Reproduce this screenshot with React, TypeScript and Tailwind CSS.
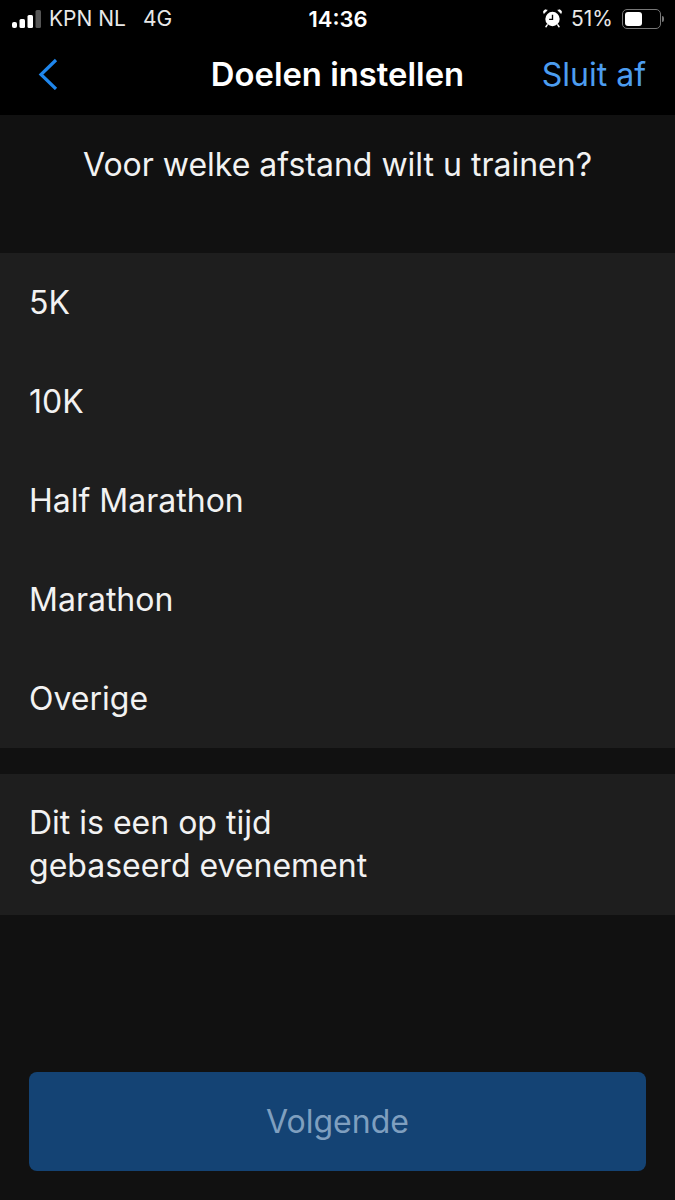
const distances = ["5K", "10K", "Half Marathon", "Marathon", "Overige"];

function SignalBars() {
  return (
    <svg width="30" height="22" viewBox="0 0 30 22" fill="none">
      <rect x="0" y="14" width="5" height="6" rx="2" fill="#fff" />
      <rect x="7.5" y="11" width="5.5" height="9" rx="1.5" fill="#fff" />
      <rect x="15.5" y="7" width="5.5" height="13" rx="1.5" fill="#fff" />
      <rect x="23.5" y="2" width="5.5" height="18" rx="1.5" fill="#555" />
    </svg>
  );
}

function AlarmIcon() {
  return (
    <svg width="19" height="19" viewBox="0 0 18 18" fill="none">
      <circle cx="9" cy="9.5" r="6.8" fill="#fff" />
      <path d="M9 5.5V9.8H5.8" stroke="#000" strokeWidth="1.3" />
      <path d="M0.8 4.2 4 1.2 1.8 0.8 0.5 2.2Z M17.2 4.2 14 1.2 16.2 0.8 17.5 2.2Z" fill="#fff" stroke="#fff" strokeWidth="0.8" />
      <path d="M4 15 2.8 16.8M14 15l1.2 1.8" stroke="#fff" strokeWidth="1.4" strokeLinecap="round" />
    </svg>
  );
}

function Battery() {
  return (
    <div className="flex items-center gap-[1px]">
      <div className="flex h-[20px] w-[39px] items-center rounded-[5px] border border-[#777] p-[2px]">
        <div className="h-full w-[17px] rounded-[3px] bg-white" />
      </div>
      <div className="h-[6px] w-[2px] rounded-r-sm bg-[#777]" />
    </div>
  );
}

export default function App() {
  return (
    <div className="flex h-[1200px] w-[675px] flex-col overflow-hidden bg-[#111111] font-['Inter',sans-serif] text-white">
      <div className="bg-black">
        <div className="grid h-[37px] grid-cols-3 items-center pl-[12px] pr-[11px] text-[21px] leading-none">
          <div className="flex items-center">
            <SignalBars />
            <span className="ml-[7px] whitespace-nowrap text-[#e8e8e8]">KPN NL</span>
            <span className="ml-[17px] text-[#e8e8e8]">4G</span>
          </div>
          <div className="text-center text-[22px] font-semibold">14:36</div>
          <div className="flex items-center justify-end gap-[9px]">
            <AlarmIcon />
            <span className="text-[#e8e8e8]">51%</span>
            <Battery />
          </div>
        </div>
        <div className="relative flex h-[78px] items-center justify-center pb-[3px]">
          <svg className="absolute left-[38px] top-[21px]" width="20" height="32" viewBox="0 0 20 32" fill="none">
            <path d="M18 2 3 16.5 18 31" stroke="#1f86ec" strokeWidth="3.2" />
          </svg>
          <span className="text-[32.8px] font-semibold leading-none">Doelen instellen</span>
          <span className="absolute right-[29px] top-[22px] text-[32px] leading-none text-[#4c9df0]">Sluit af</span>
        </div>
      </div>

      <div className="h-[138px] pt-[30px] text-center text-[32px] leading-[40px] text-[#f2f2f2]">
        Voor welke afstand wilt u trainen?
      </div>

      <div className="bg-[#1e1e1e]">
        {distances.map((d) => (
          <div key={d} className="flex h-[99px] items-center pl-[29px] text-[32px] text-[#f2f2f2]">
            {d}
          </div>
        ))}
      </div>

      <div className="mt-[26px] flex h-[141px] items-center bg-[#1e1e1e] pb-[2px] pl-[29px] text-[32px] leading-[43px] text-[#f2f2f2]">
        <span>
          Dit is een op tijd
          <br />
          gebaseerd evenement
        </span>
      </div>

      <div className="mt-[157px] px-[29px]">
        <div className="flex h-[99px] items-center justify-center rounded-[8px] bg-[#144374] text-[32px] text-[#7f9fbf]">
          Volgende
        </div>
      </div>
    </div>
  );
}
